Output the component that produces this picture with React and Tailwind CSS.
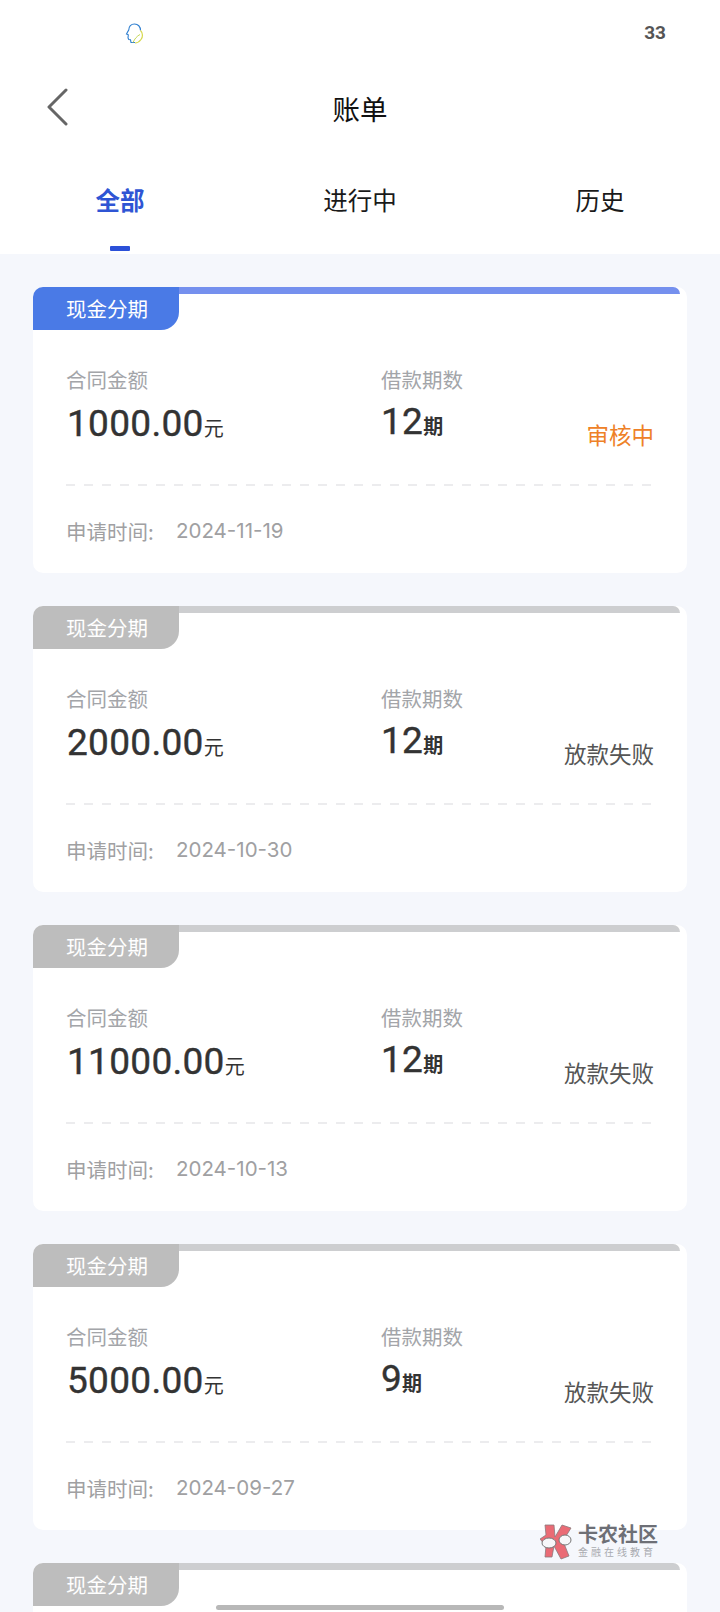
const BILLS = [
  { amount: "1000.00", periods: "12", status: "审核中", date: "2024-11-19", active: true },
  { amount: "2000.00", periods: "12", status: "放款失败", date: "2024-10-30" },
  { amount: "11000.00", periods: "12", status: "放款失败", date: "2024-10-13" },
  { amount: "5000.00", periods: "9", status: "放款失败", date: "2024-09-27" },
];

function HeadIcon() {
  return (
    <svg width="19" height="21" viewBox="0 0 19 21" fill="none">
      <path d="M15.500 7.500C15.500 3.500 13 1 9.500 1 6 1 3.800 3.500 3.800 6.800L1.500 11l1.800.8-.3 3.200.8 1.500 1.700.3L6 19.500h4" stroke="#2f7fd0" strokeWidth="1.100" />
      <path d="M15.500 7.500c2.500 2.500 2.500 6.500.5 9-1.500 2-3.500 3.500-6 3.500" stroke="#d6d84c" strokeWidth="1.200" />
      <path d="M8 19.500c1.500-3.500 4-6.500 7-8" stroke="#c7d85a" strokeWidth="1" />
    </svg>
  );
}

function BackIcon() {
  return (
    <svg width="22" height="38" viewBox="0 0 22 38" fill="none" className="absolute top-[22px] left-[46px]">
      <path d="M20 2 3 19l17 17" stroke="#666" strokeWidth="3" strokeLinecap="round" strokeLinejoin="round" />
    </svg>
  );
}

function Watermark() {
  return (
    <div className="absolute left-[540px] top-[1524px] flex items-center gap-[4px]">
      <svg width="34" height="36" viewBox="0 0 34 36">
        <path d="M5 1h9l1 12 7-12 9 3-8 13 6 15-8 3-7-13-2 11H5l1-11-6-7 6-4z" fill="#ea6b75" stroke="#8a7a7c" strokeWidth="0.8" />
        <ellipse cx="9" cy="19" rx="7" ry="5" fill="#f7f7f9" stroke="#777" strokeWidth="1" />
        <ellipse cx="25" cy="16" rx="6" ry="5" fill="#f7f7f9" stroke="#777" strokeWidth="1" />
      </svg>
      <div className="-mt-[3px] flex flex-col items-start">
        <span className="text-[20px] leading-[22px] font-bold text-[#6d6f76]">卡农社区</span>
        <span className="text-[10px] leading-[13px] tracking-[3px] text-[#a9abb0]">金融在线教育</span>
      </div>
    </div>
  );
}

function CardHead({ active }) {
  return (
    <div className="mr-[7px] flex h-[43px] items-start">
      <div
        className={`flex h-[43px] w-[146px] items-center rounded-tl-[10px] rounded-br-[18px] pl-[33px] text-[20.500px] text-white ${
          active ? "bg-[#4a7ae6]" : "bg-[#bdbdbd]"
        }`}
      >
        现金分期
      </div>
      <div className={`h-[7px] flex-1 rounded-tr-[7px] ${active ? "bg-[#7590ee]" : "bg-[#cdced0]"}`} />
    </div>
  );
}

function BillCard({ bill }) {
  return (
    <div className="h-[286px] shrink-0 rounded-[10px] bg-white">
      <CardHead active={bill.active} />

      <div className="pr-[33px] pl-[33px]">
        <div className="flex h-[154px] items-start pt-[34px]">
          <div className="w-[315px]">
            <p className="text-[20.500px] leading-[30px] text-[#a3a5a9]">合同金额</p>
            <p className="mt-[6px] flex items-baseline leading-[48px] text-[#333]">
              <span className="pl-px font-['Roboto',sans-serif] text-[37px] tracking-[0.3px] [-webkit-text-stroke:0.4px_#333]">{bill.amount}</span>
              <span className="text-[20px]">元</span>
            </p>
          </div>
          <div className="flex-1">
            <p className="text-[20.500px] leading-[30px] text-[#a3a5a9]">借款期数</p>
            <p className="mt-[5px] flex items-baseline leading-[46px] text-[#333]">
              <span className="font-['Roboto',sans-serif] text-[37px] tracking-[0.3px] [-webkit-text-stroke:0.4px_#333]">{bill.periods}</span>
              <span className="text-[20px] font-bold">期</span>
            </p>
          </div>
          <p className={`mt-[54px] text-[22.500px] leading-[32px] ${bill.active ? "text-[#ee8127]" : "text-[#555]"}`}>
            {bill.status}
          </p>
        </div>

        <div className="h-[2px] bg-[repeating-linear-gradient(90deg,#ececee_0_9px,transparent_9px_18px)]" />

        <div className="flex items-center pt-[30px] text-[#a0a0a2]">
          <span className="w-[110px] text-[20.500px] leading-[30px]">申请时间:</span>
          <span className="font-['Inter',sans-serif] text-[20.500px] leading-[30px]">{bill.date}</span>
        </div>
      </div>
    </div>
  );
}

export default function App() {
  return (
    <div className="relative h-[1612px] w-[720px] overflow-hidden bg-[#f5f7fc] font-['Noto_Sans_CJK_SC',sans-serif]">
      <div className="h-[254px] bg-white">
        <div className="flex h-[66px] items-center justify-between pr-[54px] pl-[125px]">
          <HeadIcon />
          <span className="mt-px font-['Roboto',sans-serif] text-[19px] font-bold text-[#555]">33</span>
        </div>

        <div className="relative flex h-[86px] items-center justify-center">
          <BackIcon />
          <span className="text-[27.500px] text-[#111]">账单</span>
        </div>

        <div className="grid h-[102px] grid-cols-3">
          {["全部", "进行中", "历史"].map((tab, i) => (
            <div key={tab} className="flex flex-col items-center">
              <span
                className={`mt-[30px] text-[24.500px] leading-[36px] ${
                  i === 0 ? "font-bold text-[#2f55d4]" : "text-[#1a1a1a]"
                }`}
              >
                {tab}
              </span>
              {i === 0 && <div className="mt-[28px] h-[5px] w-[20px] rounded-[1px] bg-[#2b50d8]" />}
            </div>
          ))}
        </div>
      </div>

      <div className="flex flex-col gap-[33px] px-[33px] pt-[33px]">
        {BILLS.map((bill) => (
          <BillCard key={bill.date} bill={bill} />
        ))}
        <div className="h-[100px] shrink-0 rounded-[10px] bg-white">
          <CardHead />
        </div>
      </div>

      <Watermark />
      <div className="absolute bottom-[2px] left-[216px] h-[5px] w-[288px] rounded-full bg-[#b8b8b8]" />
    </div>
  );
}
